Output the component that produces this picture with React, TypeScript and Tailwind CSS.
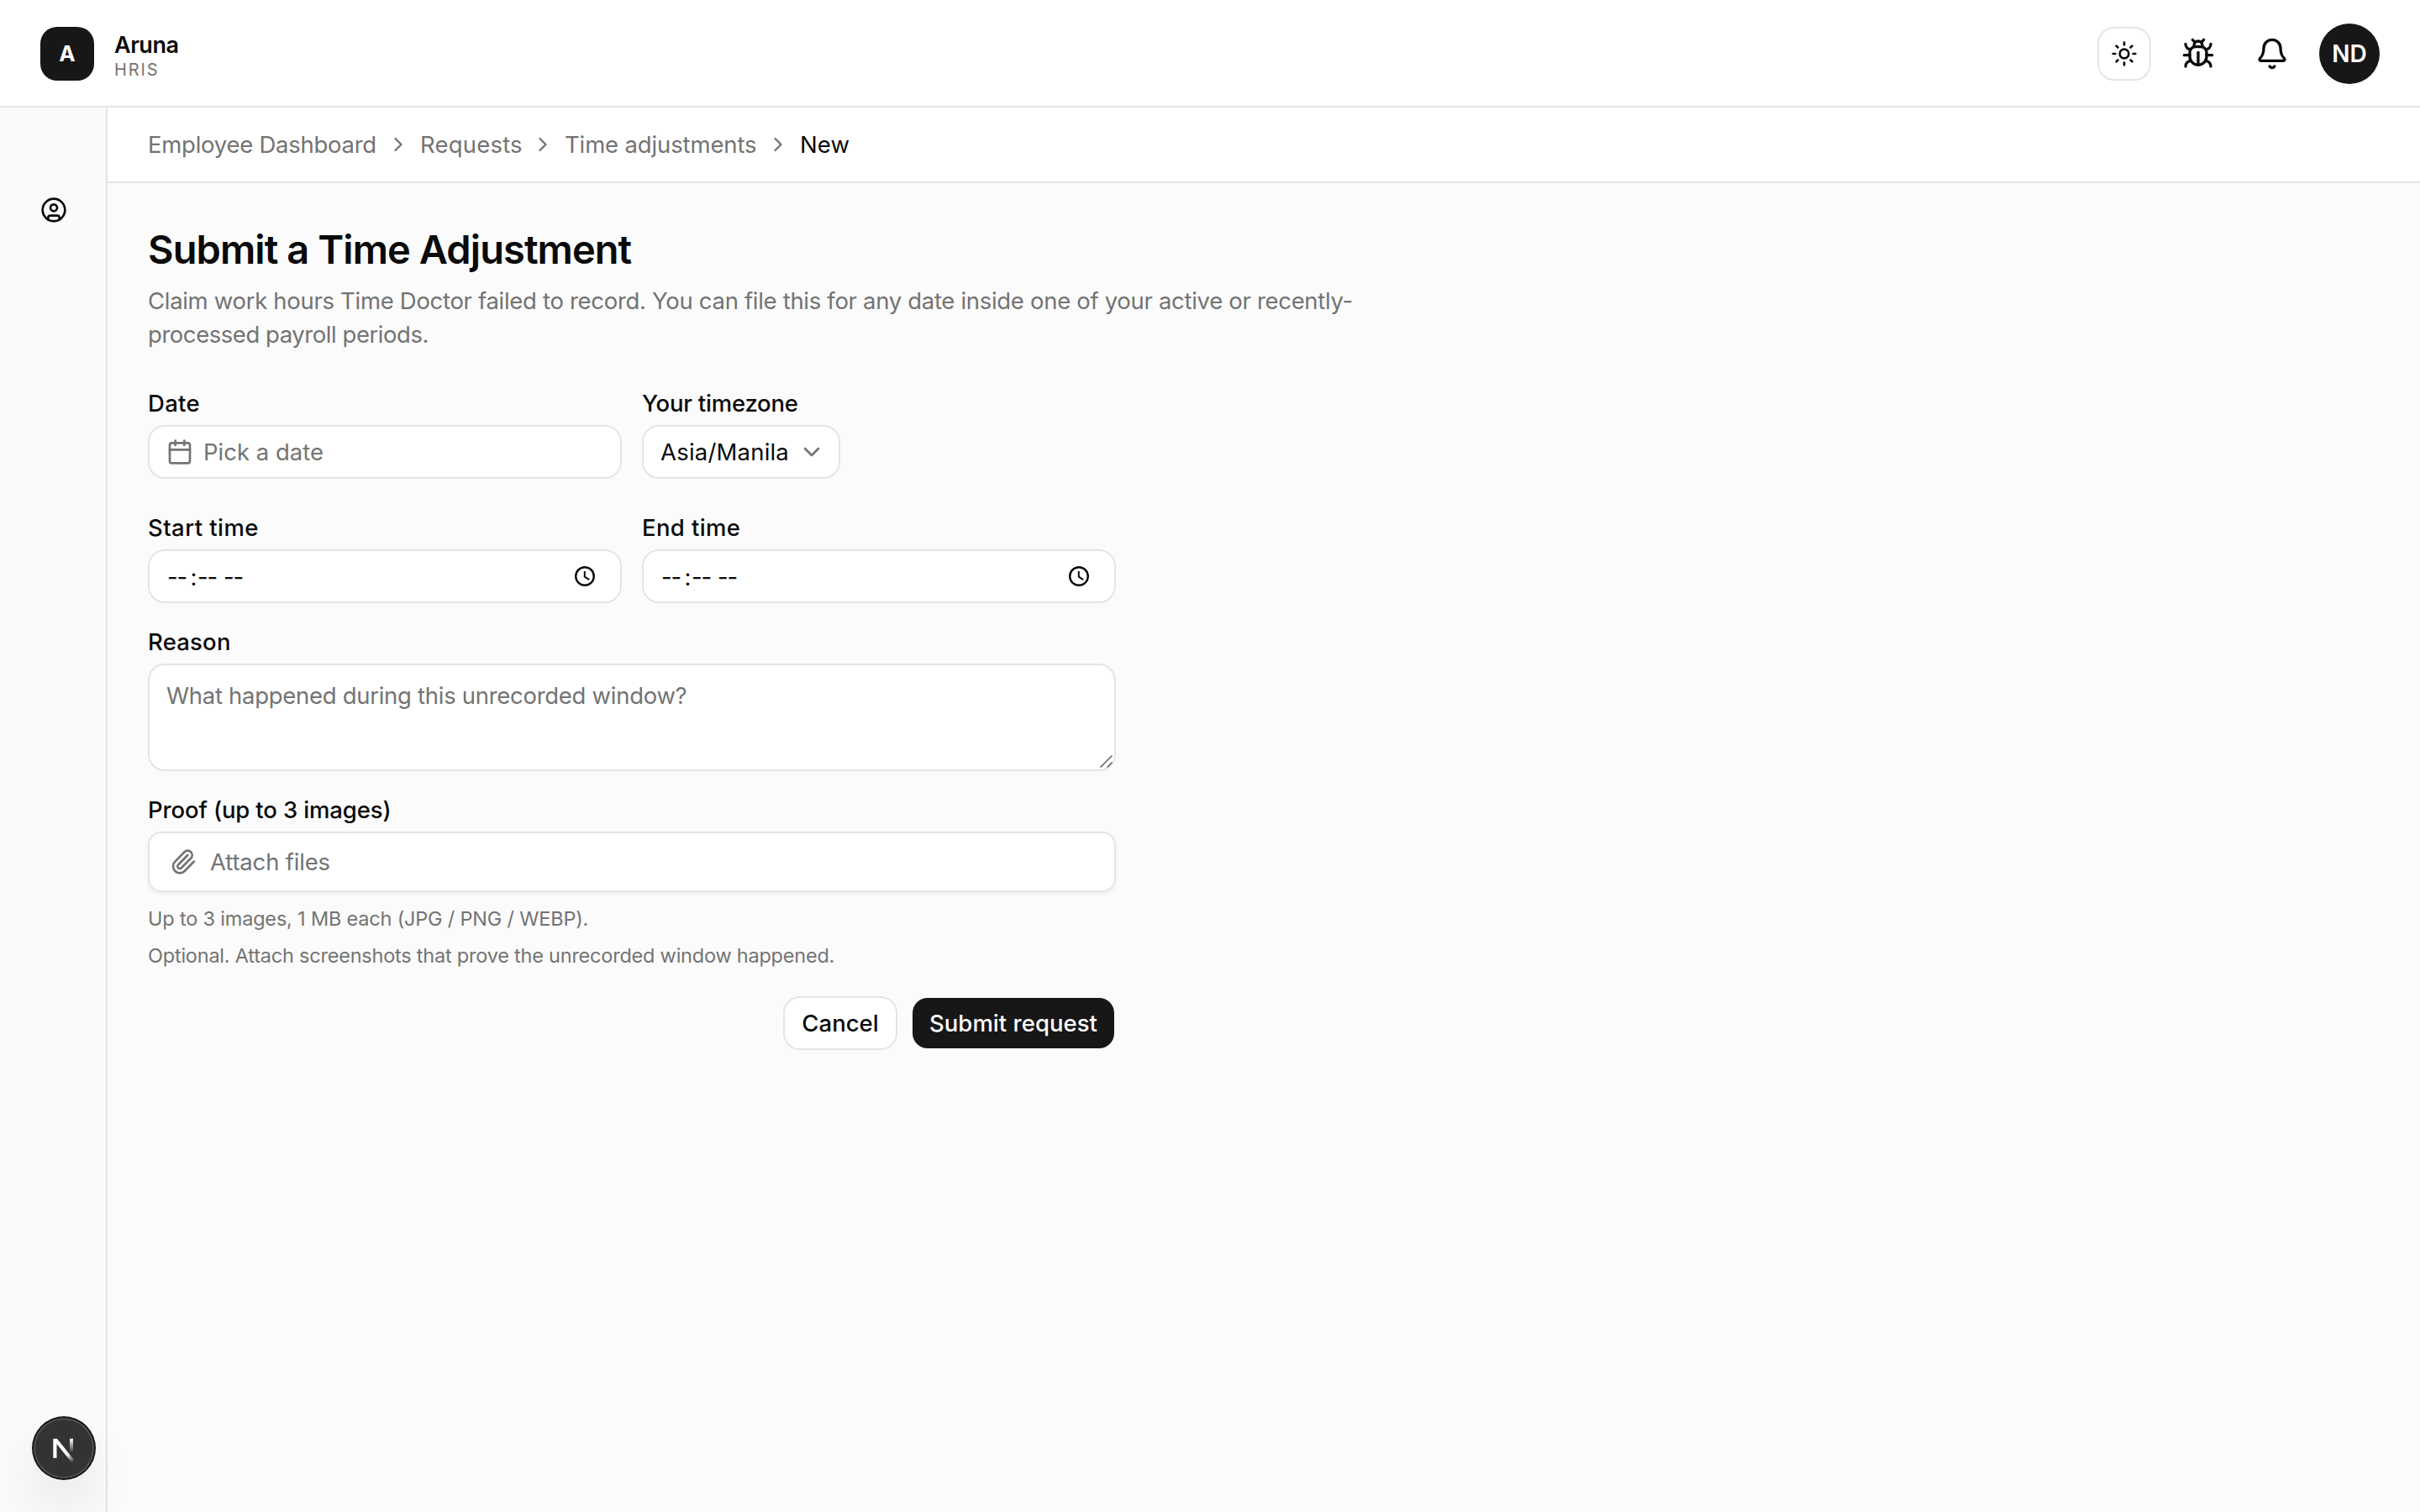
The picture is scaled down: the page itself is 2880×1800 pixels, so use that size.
import React from "react";
import { Bell, Bug, Calendar, ChevronDown, ChevronRight, CircleUser, Paperclip, Sun } from "lucide-react";

function Header() {
  return (
    <header className="flex h-32 shrink-0 items-center justify-between border-b-2 border-[#e5e5e5] bg-white px-12">
      <div className="flex items-center gap-6 pt-0.5">
        <div className="flex size-16 items-center justify-center rounded-[20px] bg-[#171717] text-[26px] font-bold leading-none text-white">
          A
        </div>
        <div className="flex flex-col gap-[3px] pt-[3px]">
          <span className="text-[27px] font-semibold leading-[32px] tracking-[-0.5px]">Aruna</span>
          <span className="text-[20px] leading-[20px] tracking-[1.87px] text-[#737373]">HRIS</span>
        </div>
      </div>
      <div className="flex items-center gap-6 pt-0.5">
        <button className="flex size-16 items-center justify-center rounded-[20px] border-2 border-[#e5e5e5] bg-white">
          <Sun size={32} />
        </button>
        <button className="flex size-16 items-center justify-center">
          <Bug size={40} />
        </button>
        <button className="flex size-16 items-center justify-center">
          <Bell size={40} />
        </button>
        <div className="flex size-[72px] items-center justify-center rounded-full bg-[#171717] text-[28px] font-semibold leading-none text-white">
          ND
        </div>
      </div>
    </header>
  );
}

function Breadcrumbs() {
  return (
    <nav className="flex h-[90px] shrink-0 items-center gap-3 whitespace-nowrap border-b-2 border-[#e5e5e5] bg-white px-12 text-[27.5px] leading-10 text-[#737373]">
      <span className="w-[272px] tracking-[-0.26px]">Employee Dashboard</span>
      <ChevronRight size={28} />
      <span className="w-[120px] tracking-[0.2px]">Requests</span>
      <ChevronRight size={28} />
      <span className="w-[228px] tracking-[-0.14px]">Time adjustments</span>
      <ChevronRight size={28} />
      <span className="tracking-[0.1px] text-[#0a0a0a]">New</span>
    </nav>
  );
}

function Label({ className, children }: { className: string; children: React.ReactNode }) {
  return <label className={`block whitespace-nowrap text-[27.5px] font-medium leading-7 ${className}`}>{children}</label>;
}

function TimeInput() {
  return (
    <div className="flex h-16 items-center justify-between rounded-[20px] border-2 border-[#e5e5e5] bg-white pl-[21px] pr-[30px] text-[27.5px] leading-10">
      <div className="flex pt-px">
        <span className="w-[27px] tracking-[-1.2px]">--</span>
        <span className="w-[9px] text-center">:</span>
        <span className="w-[31px] tracking-[-1.2px]">--</span>
        <span className="tracking-[-1.2px]">--</span>
      </div>
      <svg width="24" height="24" viewBox="0 0 24 24" fill="none" stroke="#0a0a0a">
        <circle cx="12" cy="12" r="10.8" strokeWidth="2.4" />
        <path d="M11.8 6v6.6l5.4 3.6" strokeWidth="2" />
      </svg>
    </div>
  );
}

function DevBadge() {
  return (
    <div className="fixed bottom-10 left-10 flex size-[72px] items-center justify-center rounded-full bg-[#333333] shadow-[0_0_0_2px_#171717,inset_0_0_0_2px_rgba(255,255,255,0.14),0_32px_64px_-16px_rgba(0,0,0,0.24)]">
      <svg width="72" height="72" viewBox="0 0 72 72" fill="none">
        <defs>
          <linearGradient id="diagonal" x1="40" y1="43" x2="49" y2="54" gradientUnits="userSpaceOnUse">
            <stop stopColor="#fff" />
            <stop offset="0.85" stopColor="#fff" stopOpacity="0" />
          </linearGradient>
          <linearGradient id="stem" x1="0" y1="25" x2="0" y2="41.5" gradientUnits="userSpaceOnUse">
            <stop stopColor="#fff" />
            <stop offset="1" stopColor="#fff" stopOpacity="0" />
          </linearGradient>
          <clipPath id="top">
            <rect x="0" y="24.7" width="72" height="47" />
          </clipPath>
        </defs>
        <path d="M49 54.4 25.4 25V47.8" stroke="url(#diagonal)" strokeWidth="4.2" strokeMiterlimit="10" clipPath="url(#top)" />
        <path d="M45 24.7V48" stroke="url(#stem)" strokeWidth="4" />
      </svg>
    </div>
  );
}

export default function App() {
  return (
    <div className="flex h-[1800px] w-[2880px] flex-col overflow-hidden bg-[#fbfbfb] font-['Inter',sans-serif] text-[#0a0a0a]">
      <Header />
      <div className="flex min-h-0 flex-1">
        <aside className="flex w-32 shrink-0 flex-col items-center border-r-2 border-[#e5e5e5] bg-[#fafafa] pl-0.5 pt-[106px]">
          <CircleUser size={32} />
        </aside>
        <div className="flex min-w-0 flex-1 flex-col">
          <Breadcrumbs />
          <main className="px-12 pt-12">
            <h1 className="whitespace-nowrap text-[47px] font-semibold leading-[62px] tracking-[-0.93px]">Submit a Time Adjustment</h1>
            <p className="mt-2.5 whitespace-nowrap text-[27.5px] leading-10 text-[#737373]">
              <span className="tracking-[-0.31px]">
                Claim work hours Time Doctor failed to record. You can file this for any date inside one of your active or recently-
              </span>
              <br />
              <span className="tracking-[-0.45px]">processed payroll periods.</span>
            </p>

            <form className="mt-12 flex w-[1152px] flex-col gap-8">
              <div className="flex flex-col gap-11">
                <div className="grid grid-cols-2 gap-6">
                  <div className="flex flex-col gap-3">
                    <Label className="tracking-[0.33px]">Date</Label>
                    <button
                      type="button"
                      className="flex h-16 items-center gap-3 rounded-[20px] border-2 border-[#e5e5e5] bg-white px-5 text-[27.5px] leading-10 text-[#737373]"
                    >
                      <Calendar size={32} />
                      <span>Pick a date</span>
                    </button>
                  </div>
                  <div className="flex flex-col items-start gap-3">
                    <Label className="tracking-[-0.21px]">Your timezone</Label>
                    <button
                      type="button"
                      className="flex h-16 w-[236px] items-center justify-between rounded-[20px] border-2 border-[#e5e5e5] bg-white pl-5 pr-4 text-[27.5px] leading-10 tracking-[0.2px]"
                    >
                      <span>Asia/Manila</span>
                      <ChevronDown size={32} color="#737373" />
                    </button>
                  </div>
                </div>
                <div className="grid grid-cols-2 gap-6">
                  <div className="flex flex-col gap-3">
                    <Label className="tracking-[0.43px]">Start time</Label>
                    <TimeInput />
                  </div>
                  <div className="flex flex-col gap-3">
                    <Label className="tracking-[0.37px]">End time</Label>
                    <TimeInput />
                  </div>
                </div>
              </div>

              <div className="flex flex-col gap-3">
                <Label className="tracking-[0.2px]">Reason</Label>
                <div className="relative h-32 rounded-[20px] border-2 border-[#e5e5e5] bg-white px-5 pt-4 text-[27.5px] leading-10 tracking-[-0.29px] text-[#737373]">
                  What happened during this unrecorded window?
                  <svg className="absolute bottom-0.5 right-0.5" width="15" height="15" viewBox="0 0 15 15" stroke="#525252" strokeWidth="1.4">
                    <path d="M0.5 14.5 14.5 0.5M8.5 14.5 14.5 8.5" />
                  </svg>
                </div>
              </div>

              <div className="flex flex-col">
                <Label className="tracking-[-0.14px]">Proof (up to 3 images)</Label>
                <div className="mt-3 flex h-[72px] items-center gap-4 rounded-2xl border-2 border-[#e5e5e5] bg-white px-6 text-[27.5px] leading-10 tracking-[-0.18px] text-[#737373] shadow-[0_2px_4px_rgba(0,0,0,0.06)]">
                  <Paperclip size={32} />
                  <span>Attach files</span>
                </div>
                <p className="mt-4 text-[23.5px] leading-8 tracking-[-0.19px] text-[#737373]">Up to 3 images, 1 MB each (JPG / PNG / WEBP).</p>
                <p className="mt-3 text-[23.5px] leading-8 tracking-[-0.22px] text-[#737373]">
                  Optional. Attach screenshots that prove the unrecorded window happened.
                </p>
              </div>

              <div className="flex justify-end gap-4 text-[27.5px] font-medium leading-10">
                <button type="button" className="h-16 w-[136px] rounded-[20px] border-2 border-[#e5e5e5] bg-white">
                  Cancel
                </button>
                <button
                  type="button"
                  className="h-16 w-[244px] whitespace-nowrap rounded-[20px] border-2 border-transparent bg-[#171717] bg-clip-padding tracking-[0.04px] text-white"
                >
                  Submit request
                </button>
              </div>
            </form>
          </main>
        </div>
      </div>
      <DevBadge />
    </div>
  );
}
